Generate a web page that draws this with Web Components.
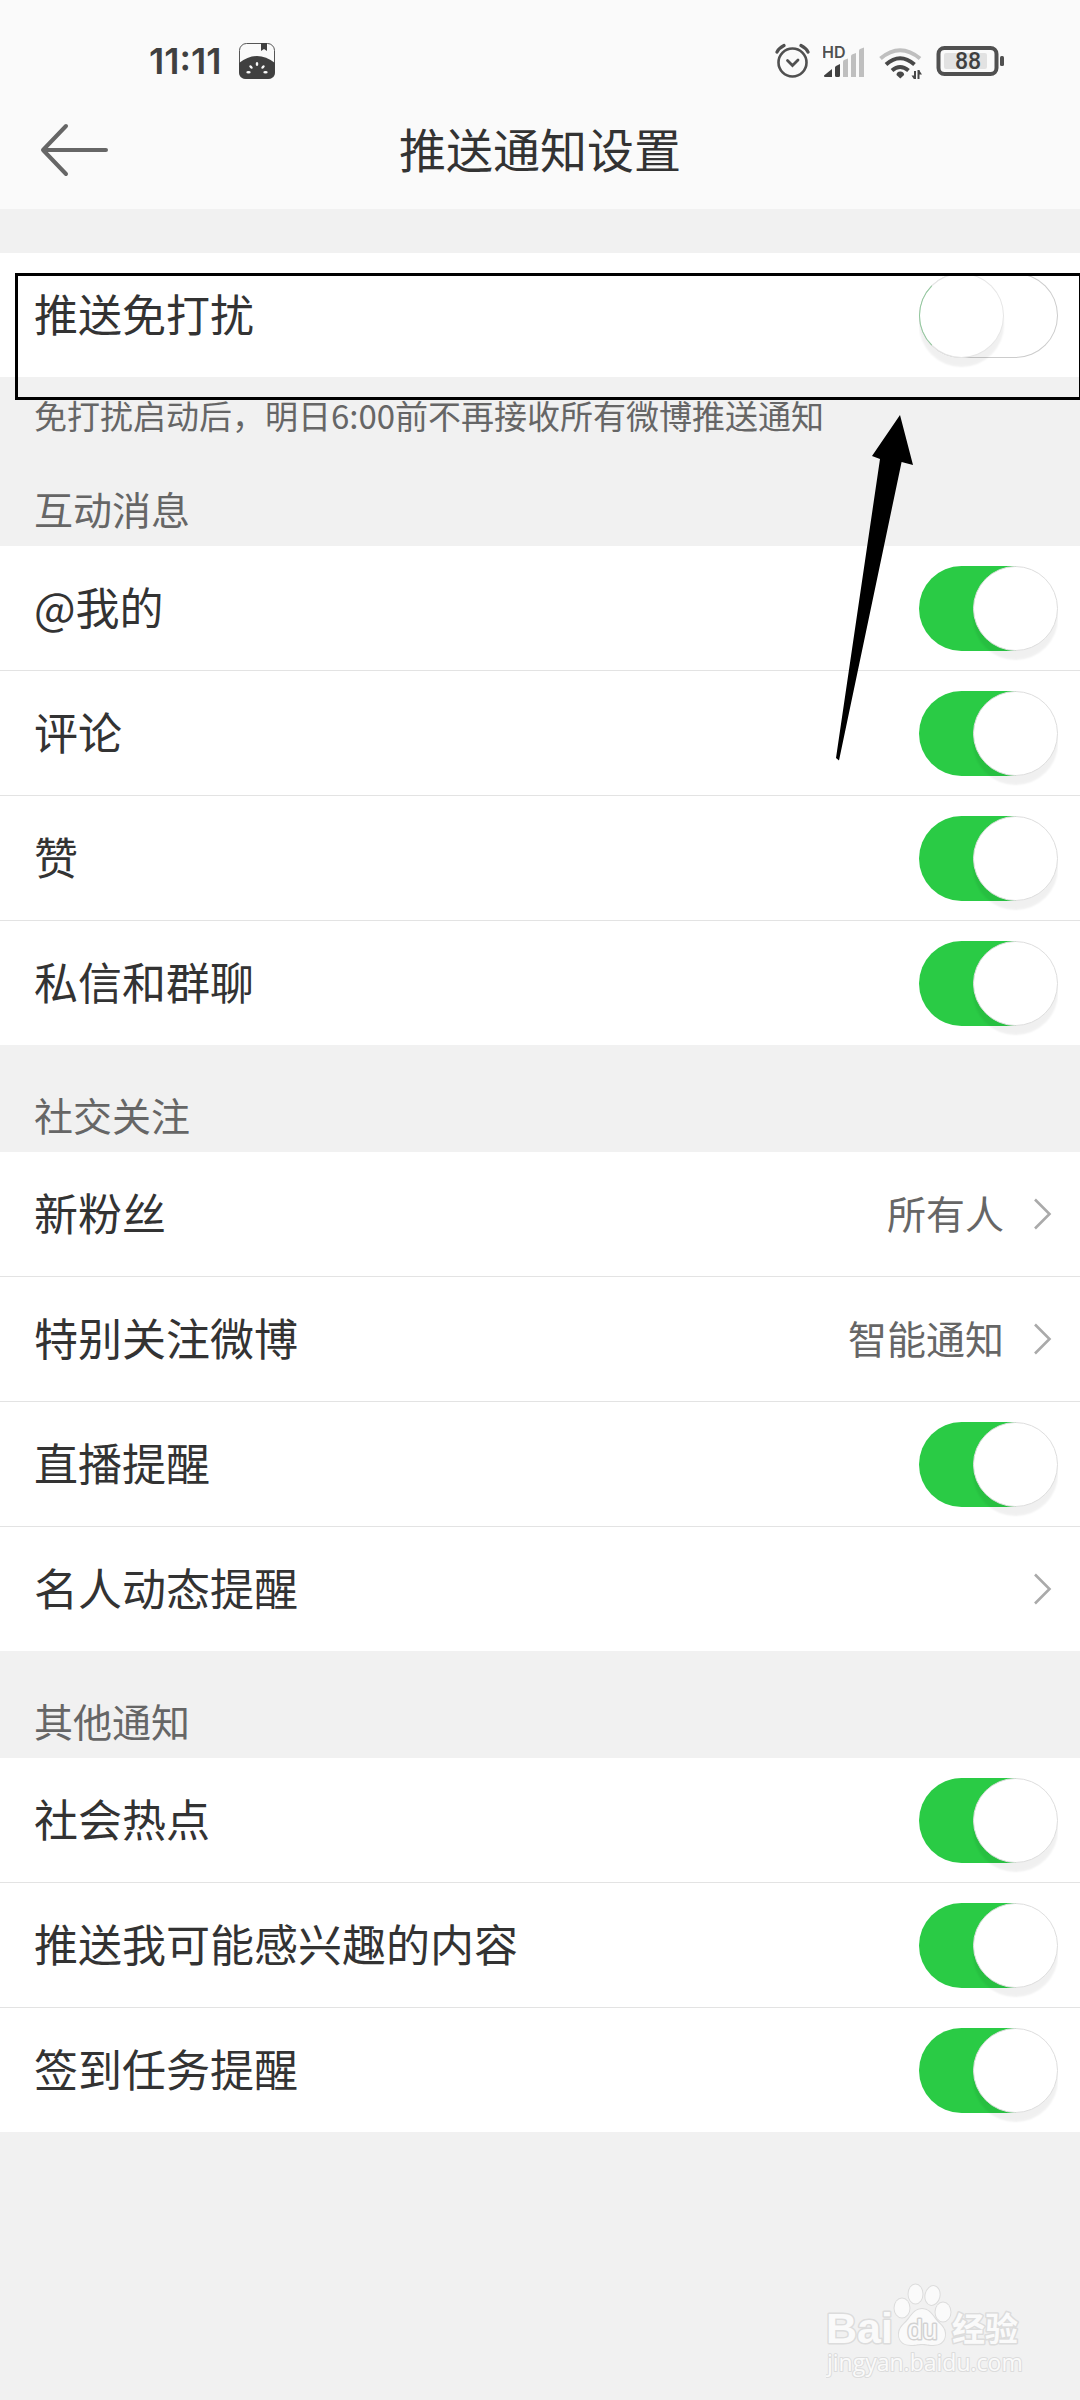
<!DOCTYPE html>
<html lang="zh-CN">
<head>
<meta charset="utf-8">
<meta name="viewport" content="width=device-width, initial-scale=1">
<title>推送通知设置</title>
<style>
body { margin: 0; background: #f1f1f1; font-family: "Noto Sans CJK SC", sans-serif; color: #333; }
</style>
</head>
<body>
<settings-page>
  <status-bar slot="top"></status-bar>
  <nav-bar slot="top">推送通知设置</nav-bar>
  <callout-mark>
    <settings-row kind="toggle">推送免打扰</settings-row>
  </callout-mark>
  <settings-note>免打扰启动后，明日6:00前不再接收所有微博推送通知</settings-note>
  <settings-group heading="互动消息">
    <settings-row kind="toggle" on>@我的</settings-row>
    <settings-row kind="toggle" on>评论</settings-row>
    <settings-row kind="toggle" on>赞</settings-row>
    <settings-row kind="toggle" on>私信和群聊</settings-row>
  </settings-group>
  <settings-group heading="社交关注">
    <settings-row kind="link" value="所有人">新粉丝</settings-row>
    <settings-row kind="link" value="智能通知">特别关注微博</settings-row>
    <settings-row kind="toggle" on>直播提醒</settings-row>
    <settings-row kind="link">名人动态提醒</settings-row>
  </settings-group>
  <settings-group heading="其他通知">
    <settings-row kind="toggle" on>社会热点</settings-row>
    <settings-row kind="toggle" on>推送我可能感兴趣的内容</settings-row>
    <settings-row kind="toggle" on>签到任务提醒</settings-row>
  </settings-group>
  <site-mark slot="bottom"></site-mark>
</settings-page>

<script>
function define(name, html, setup) {
  const template = document.createElement('template');
  template.innerHTML = html;
  customElements.define(name, class extends HTMLElement {
    constructor() {
      super();
      this.attachShadow({ mode: 'open' }).append(template.content.cloneNode(true));
    }
    connectedCallback() { if (setup) setup(this, this.shadowRoot); }
  });
}

define('settings-page', `
<style>
:host { display: flex; flex-direction: column; min-height: 100vh; overflow: hidden; }
header { background: #fafafa; margin-bottom: 44px; }
footer { margin-top: auto; display: flex; justify-content: flex-end; padding: 0 50px 17px; }
</style>
<header><slot name="top"></slot></header>
<main><slot></slot></main>
<footer><slot name="bottom"></slot></footer>`);

define('status-bar', `
<style>
:host { display: flex; align-items: center; justify-content: space-between; height: 61px; padding: 30px 76px 0 149px; color: #404040; font-family: Inter, sans-serif; }
div { display: flex; align-items: center; }
.left { gap: 18px; }
.right { gap: 13px; }
time { font-size: 36px; line-height: 40px; font-weight: 600; }
svg { display: block; }
</style>
<div class="left">
  <time>11:11</time>
  <svg width="36" height="36" viewBox="0 0 36 36">
    <rect x=".5" y=".5" width="35" height="35" rx="7" fill="none" stroke="#555"/>
    <path d="M0 20Q18 6 36 20V29Q36 36 29 36H7Q0 36 0 29Z" fill="#404040"/>
    <path d="M22 0h6v8l-3-2-3 2z" fill="#404040"/>
    <g fill="#fafafa">
      <ellipse cx="18" cy="21" rx="1.3" ry="2.1"/>
      <ellipse cx="12" cy="24" rx="1.3" ry="2.1" transform="rotate(-42 12 24)"/>
      <ellipse cx="24" cy="24" rx="1.3" ry="2.1" transform="rotate(42 24 24)"/>
      <ellipse cx="9.5" cy="29.3" rx="2.2" ry="1.2"/>
      <ellipse cx="26.5" cy="29.3" rx="2.2" ry="1.2"/>
    </g>
  </svg>
</div>
<div class="right">
  <svg width="35" height="36" viewBox="0 0 35 36" fill="none" stroke="#505050" stroke-width="2.6" stroke-linecap="round">
    <circle cx="17.5" cy="19.500" r="14"/>
    <path d="M2 9Q4 5 9 2.500M33 9Q31 5 26 2.500" stroke-width="3.200"/>
    <path d="M12.500 17.500l5 5 5.500-5.500" stroke-width="2.800"/>
  </svg>
  <svg width="43" height="36" viewBox="0 0 43 36">
    <text x="-1" y="15" font-size="16" font-weight="600" fill="#505050">HD</text>
    <path d="M1 32.500 9 26V34H2.500Q.5 34 1 32.500ZM12 24.500q0-1 1-1.500l4-2V32.500q0 1.500-1.500 1.500h-2q-1.500 0-1.500-1.500z" fill="#404040"/>
    <path d="M20 19q0-1.500 1-2l4-1.500V34h-5zM28 13.500q0-1.500 1-2l4-1.500V34h-5zM36 8q0-1.500 1-2l4-1.500V34h-5z" fill="#bfbfbf"/>
  </svg>
  <svg width="43" height="36" viewBox="0 0 43 36" fill="none" stroke="#484848" stroke-width="4">
    <path d="M1.500 15.500Q21 -1 41 15.500" stroke="#bfbfbf"/>
    <path d="M7 21.500Q21 9 35.500 21.500M13 27.500Q21 20.500 29.500 27.500"/>
    <path d="M17.500 32q0-3.500 3.800-3.500t3.800 3.500l-3.800 3.500z" fill="#484848" stroke="none"/>
    <path d="M36 28v9M39.500 27v9" stroke-width="2"/><path d="M32.500 32.500h3v4.500zM43 31.500h-3V27z" fill="#484848" stroke="none"/>
  </svg>
  <svg width="69" height="36" viewBox="0 0 69 36">
    <rect x="3.500" y="5" width="58" height="26" rx="6" fill="none" stroke="#505050" stroke-width="4"/>
    <rect x="9" y="10" width="43" height="16" rx="2" fill="#e2e2e2"/>
    <rect x="65" y="13" width="4" height="10" rx="1.500" fill="#505050"/>
    <text x="33" y="26" font-size="23" font-weight="500" text-anchor="middle" fill="#404040" style="font-family:Roboto,sans-serif">88</text>
  </svg>
</div>`);

define('nav-bar', `
<style>
:host { display: grid; grid-template-columns: 120px 1fr 120px; align-items: center; height: 118px; }
button { appearance: none; border: 0; background: none; padding: 0 0 0 40px; height: 100%; cursor: pointer; }
h1 { margin: 0; padding-bottom: 4px; font-size: 47px; line-height: 60px; font-weight: 400; text-align: center; white-space: nowrap; }
svg { display: block; }
</style>
<button type="button" aria-label="返回">
  <svg width="70" height="54" viewBox="0 0 70 54" fill="none" stroke="#666" stroke-width="4" stroke-linecap="round" stroke-linejoin="round"><path d="M66 27H3M26 3 3 27 26 51"/></svg>
</button>
<h1><slot></slot></h1>`);

define('settings-note', `
<style>
:host { display: block; padding: 22px 34px 8px; font-size: 33px; line-height: 32px; color: #666; }
p { margin: 0; }
</style>
<p><slot></slot></p>`);

define('settings-group', `
<style>
:host { display: block; }
h2 { margin: 0; padding: 46px 34px 15px; font-size: 39px; line-height: 46px; font-weight: 400; color: #666; }
.rows { display: flex; flex-direction: column; gap: 1px; background: #e3e3e3; }
</style>
<section><h2></h2><div class="rows"><slot></slot></div></section>`,
(host, root) => { root.querySelector('h2').textContent = host.getAttribute('heading'); });

define('settings-row', `
<style>
:host { display: block; background: #fff; }
.row { box-sizing: border-box; display: flex; align-items: center; width: 100%; height: 124px; padding: 0 22px 0 34px; margin: 0; border: 0; background: none; font: inherit; color: inherit; text-align: left; cursor: pointer; }
.text { flex: 1; padding-bottom: 4px; font-size: 44px; line-height: 60px; }
.value { padding-bottom: 4px; font-size: 39px; line-height: 60px; color: #666; margin-right: 30px; }
svg { display: block; }
</style>
<slot hidden></slot>`,
(host, root) => {
  const toggle = host.getAttribute('kind') === 'toggle';
  const row = document.createElement(toggle ? 'label' : 'button');
  row.className = 'row';
  if (toggle) {
    row.htmlFor = 'switch';
    row.innerHTML = `
<style>
input { appearance: none; flex: none; position: relative; width: 139px; height: 85px; margin: 0; border-radius: 43px; background: #fff; box-shadow: inset 0 0 0 1px #ccc; clip-path: inset(0 0 -14px 0); cursor: pointer; }
input::before { content: ""; position: absolute; left: 0; top: 0; box-sizing: border-box; width: 85px; height: 85px; border-radius: 50%; border: 1px solid #e6e6e6; border-left-color: #8fc79b; background: #fff; box-shadow: 0 9px 2px rgba(0,0,0,.06); }
input:checked { background: linear-gradient(90deg, #2acb45 70%, transparent 70%); box-shadow: none; }
input:checked::before { left: 54px; border-color: #ddd; }
</style>
<span class="text"><slot></slot></span><input id="switch" type="checkbox" role="switch">`;
    row.querySelector('input').checked = host.hasAttribute('on');
  } else {
    row.type = 'button';
    row.innerHTML = `
<span class="text"><slot></slot></span><span class="value"></span>
<svg width="24" height="32" viewBox="0 0 24 32" fill="none" stroke="#aaa" stroke-width="2.600"><path d="M1 1.500 15.500 16 1 30.500"/></svg>`;
    row.querySelector('.value').textContent = host.getAttribute('value') || '';
  }
  root.querySelector('slot[hidden]').replaceWith(row);
});

define('callout-mark', `
<style>
:host { display: block; position: relative; }
.frame { position: absolute; z-index: 1; box-sizing: border-box; left: 15px; right: -2px; top: 20px; height: 127px; border: 3px solid #000; pointer-events: none; }
svg { position: absolute; z-index: 1; right: 160px; top: 160px; pointer-events: none; }
</style>
<slot></slot>
<div class="frame"></div>
<svg width="90" height="350" viewBox="0 0 90 350"><path d="M70 2 83 52 71.600 49 9 347.500 6 345 50 46 42 43Z"/></svg>`);

define('site-mark', `
<style>
:host { display: block; font-family: "Open Sans", sans-serif; }
svg { display: block; }
</style>
<svg width="204" height="104" viewBox="0 0 204 104" fill="#fafafa" stroke="#dcdcdc" stroke-width="2" stroke-linejoin="round" paint-order="stroke">
  <text x="0" y="64" font-size="43" font-weight="700" style="font-family:'Liberation Sans',sans-serif" stroke-width="3">Bai</text>
  <ellipse cx="76" cy="29" rx="7.500" ry="9.500"/>
  <ellipse cx="89.500" cy="15" rx="7" ry="9.500"/>
  <ellipse cx="106.500" cy="16.500" rx="7" ry="9.500" transform="rotate(12 106.500 16.500)"/>
  <ellipse cx="117" cy="33" rx="7.500" ry="9.500"/>
  <path d="M96 30C105 30 107 39 114 45C122 52 121 66 107 66C101 66 101 65 96 65C91 65 91 66 85 66C71 66 70 52 78 45C85 39 87 30 96 30Z"/>
  <text x="96.500" y="60" text-anchor="middle" font-size="27" style="font-family:'Liberation Sans',sans-serif" stroke="#d2d2d2" stroke-width="3">du</text>
  <text x="126" y="62" font-size="33" font-weight="700" style="font-family:'Noto Sans CJK SC',sans-serif" stroke-width="3">经验</text>
  <text x="1" y="92" font-size="23" stroke-width="2">jingyan.baidu.com</text>
</svg>`);
</script>
</body>
</html>
